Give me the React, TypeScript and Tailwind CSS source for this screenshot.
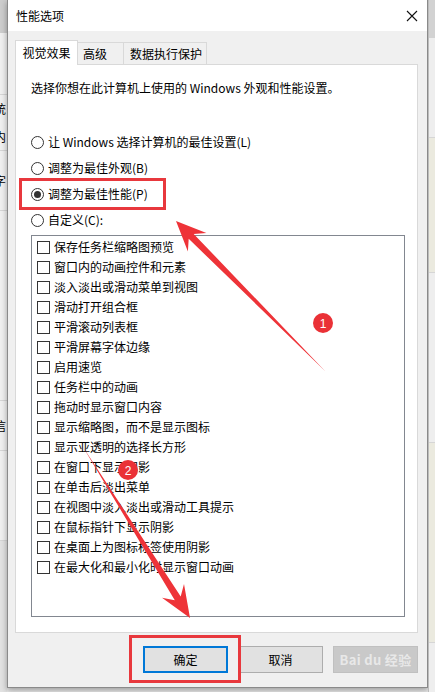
import React from "react";

const options = [
  "保存任务栏缩略图预览",
  "窗口内的动画控件和元素",
  "淡入淡出或滑动菜单到视图",
  "滑动打开组合框",
  "平滑滚动列表框",
  "平滑屏幕字体边缘",
  "启用速览",
  "任务栏中的动画",
  "拖动时显示窗口内容",
  "显示缩略图，而不是显示图标",
  "显示亚透明的选择长方形",
  "在窗口下显示阴影",
  "在单击后淡出菜单",
  "在视图中淡入淡出或滑动工具提示",
  "在鼠标指针下显示阴影",
  "在桌面上为图标标签使用阴影",
  "在最大化和最小化时显示窗口动画",
];

const radios = [
  { label: "让 Windows 选择计算机的最佳设置(L)", checked: false },
  { label: "调整为最佳外观(B)", checked: false },
  { label: "调整为最佳性能(P)", checked: true },
  { label: "自定义(C):", checked: false },
];

// red annotation arrow, tapering from tail to a barbed head
function arrowPoints(tail: [number, number], tip: [number, number], len: number, half: number) {
  const dx = tip[0] - tail[0];
  const dy = tip[1] - tail[1];
  const l = Math.hypot(dx, dy);
  const ux = dx / l;
  const uy = dy / l;
  const nx = -uy;
  const ny = ux;
  const bx = tip[0] - len * ux;
  const by = tip[1] - len * uy;
  const cx = tip[0] - len * 0.72 * ux;
  const cy = tip[1] - len * 0.72 * uy;
  const pts = [
    [tail[0], tail[1]],
    [cx + 3.5 * nx, cy + 3.5 * ny],
    [bx + half * nx, by + half * ny],
    [tip[0], tip[1]],
    [bx - half * nx, by - half * ny],
    [cx - 3.5 * nx, cy - 3.5 * ny],
  ];
  return pts.map((p) => `${p[0].toFixed(1)},${p[1].toFixed(1)}`).join(" ");
}

const Radio = ({ checked }: { checked: boolean }) => (
  <span className="w-[13px] h-[13px] rounded-full border border-[#333] bg-white flex items-center justify-center shrink-0">
    {checked && <span className="w-[7px] h-[7px] rounded-full bg-[#333]" />}
  </span>
);

export default function App() {
  return (
    <div
      className="relative w-[435px] h-[692px] overflow-hidden bg-[#e9e9e9] flex text-[12px] text-black"
      style={{ fontFamily: '"Noto Sans CJK SC", "Noto Sans", sans-serif' }}
    >
      {/* desktop behind the dialog, left */}
      <div className="w-[7px] shrink-0 flex flex-col overflow-hidden bg-[#f0f0f0]">
        <div className="h-[33px] bg-[#cdcdcd] shrink-0" />
        <div className="h-[62px] border-b border-[#d6d6d6] shrink-0" />
        <div className="h-[28px] -ml-[6px] leading-[28px] shrink-0">统</div>
        <div className="h-[28px] -ml-[6px] leading-[28px] border-b border-[#d6d6d6] shrink-0">内</div>
        <div className="h-[60px] -ml-[6px] leading-[60px] border-b border-[#d6d6d6] shrink-0">字</div>
        <div className="h-[190px] border-b border-[#d6d6d6] shrink-0" />
        <div className="h-[50px] -ml-[6px] leading-[50px] border-b border-[#d6d6d6] shrink-0">信</div>
        <div className="h-[90px] border-b border-[#d6d6d6] shrink-0" />
        <div className="flex-1 bg-[#e2e2e2]" />
      </div>

      {/* dialog */}
      <div className="w-[421px] h-[688px] shrink-0 flex flex-col border-l border-r border-b border-[#8a8a8a] bg-[#f0f0f0] shadow-[0_2px_6px_rgba(0,0,0,0.35)]">
        <div className="h-[31px] bg-white flex items-center justify-between pl-[8px] pr-[9px] shrink-0">
          <span className="leading-[16px]">性能选项</span>
          <svg width="12" height="12" viewBox="0 0 12 12">
            <path d="M1 1L11 11M11 1L1 11" stroke="#111" strokeWidth="1.1" />
          </svg>
        </div>

        <div className="flex-1 flex flex-col pl-[7px] pr-[9px] pt-[9px]">
          {/* tabs */}
          <div className="flex items-end h-[24px] relative z-10">
            <div className="w-[63px] h-[25px] bg-white border border-b-0 border-[#d9d9d9] flex items-center justify-center -mb-[1px]">
              视觉效果
            </div>
            <div className="w-[46px] h-[22px] border-t border-r border-[#d9d9d9] flex items-center pl-[5px] bg-[#f0f0f0]">
              高级
            </div>
            <div className="w-[83px] h-[22px] border-t border-r border-[#d9d9d9] flex items-center pl-[6px] bg-[#f0f0f0]">
              数据执行保护
            </div>
          </div>

          {/* tab panel */}
          <div className="h-[569px] bg-white border border-[#d9d9d9] flex flex-col pl-[15px] pr-[12px]">
            <div className="mt-[13px] leading-[20px]">选择你想在此计算机上使用的 Windows 外观和性能设置。</div>

            <div className="mt-[31px] flex flex-col">
              {radios.map((r) => (
                <div key={r.label} className="h-[26px] flex items-center gap-[4px]">
                  <Radio checked={r.checked} />
                  <span className="leading-[20px]">{r.label}</span>
                </div>
              ))}
            </div>

            <div className="mt-[2px] h-[382px] border border-[#828790] flex flex-col pl-[5px] pt-[1px]">
              {options.map((o) => (
                <div key={o} className="h-[20px] flex items-center gap-[4px]">
                  <span className="w-[13px] h-[13px] border border-[#333] bg-white shrink-0" />
                  <span className="leading-[20px]">{o}</span>
                </div>
              ))}
            </div>
          </div>

          {/* buttons */}
          <div className="mt-[13px] flex justify-end gap-[10px]">
            <button className="w-[85px] h-[27px] bg-[#e1e1e1] border-2 border-[#0078d7] flex items-center justify-center">
              确定
            </button>
            <button className="w-[85px] h-[27px] bg-[#e1e1e1] border border-[#adadad] flex items-center justify-center">
              取消
            </button>
            <button className="relative w-[85px] h-[27px] bg-[#c9c9c9] border border-[#c0c0c0] flex items-center justify-center text-[#e8e8e8] text-[13px] font-bold tracking-wide">
              Bai du 经验
            </button>
          </div>
        </div>
      </div>

      {/* desktop behind the dialog, right */}
      <div className="flex-1 flex flex-col bg-[#eeeeee] border-l border-[#bcbcbc]">
        <div className="h-[38px] bg-[#d2d2d2] shrink-0" />
        <div className="h-[100px] border-b border-[#d6d6d6] shrink-0" />
        <div className="h-[135px] bg-[#ebeadf] border-b border-[#d6d6d6] shrink-0" />
        <div className="h-[170px] border-b border-[#d6d6d6] shrink-0" />
        <div className="h-[200px] bg-[#ebeadf] border-b border-[#d6d6d6] shrink-0" />
        <div className="flex-1" />
      </div>

      {/* annotations */}
      <div className="absolute left-[19px] top-[178px] w-[147px] h-[32px] border-[3px] border-[#e8383d] pointer-events-none" />
      <div className="absolute left-[129px] top-[635px] w-[112px] h-[48px] border-[3px] border-[#e8383d] pointer-events-none" />
      <svg className="absolute inset-0 pointer-events-none" width="435" height="692" viewBox="0 0 435 692">
        <polygon points={arrowPoints([325, 371], [176, 221], 30, 13)} fill="#ee3338" />
        <polygon points={arrowPoints([83, 447], [190, 618], 32, 13)} fill="#ee3338" />
        <circle cx="323" cy="323" r="10" fill="#ea3136" />
        <text x="323" y="327.5" textAnchor="middle" fontSize="12" fill="#fff" fontFamily="Liberation Sans, sans-serif">1</text>
        <circle cx="128" cy="470" r="10" fill="#ea3136" />
        <text x="128" y="474.5" textAnchor="middle" fontSize="12" fill="#fff" fontFamily="Liberation Sans, sans-serif">2</text>
      </svg>
    </div>
  );
}
